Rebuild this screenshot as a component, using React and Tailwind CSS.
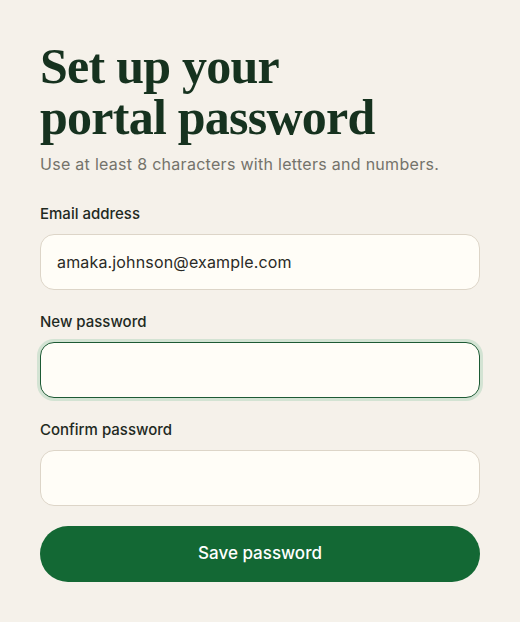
import React from "react";

const fields = [
    { label: "Email address", value: "amaka.johnson@example.com", type: "email" },
    { label: "New password", value: "", type: "password", focused: true },
    { label: "Confirm password", value: "", type: "password" },
];

export default function App() {
    return (
        <div className="min-h-screen w-full bg-[#f5f1ea] px-10 pt-[41px] [font-family:'Inter','Noto_Sans',sans-serif]">
            <h1 className="[font-family:'Liberation_Serif','DejaVu_Serif',serif] font-bold text-[#16321f] text-[50px] leading-[51px] tracking-[-0.015em]">
                <span className="block">Set up your</span>
                <span className="block">portal password</span>
            </h1>
            <p className="mt-[11px] text-[16px] leading-5 tracking-[0.018em] text-[#74736b]">
                Use at least 8 characters with letters and numbers.
            </p>

            <form className="mt-[30px] flex flex-col gap-[22px]" onSubmit={(e) => e.preventDefault()}>
                {fields.map((f, i) => (
                    <label key={i} className="flex flex-col gap-[10px]">
                        <span className="text-[15px] leading-5 font-medium text-[#1f2a1f]">{f.label}</span>
                        <input
                            type={f.type}
                            defaultValue={f.value}
                            className={
                                f.focused
                                    ? "h-14 w-full rounded-[14px] border border-[#1d5a34] bg-[#fffdf7] px-4 text-[16px] text-[#2a2a26] outline-none ring-[3px] ring-[#d3e3d3]"
                                    : "h-14 w-full rounded-[14px] border border-[#ddd5c8] bg-[#fffdf7] px-4 text-[16px] tracking-[0.01em] text-[#2a2a26] outline-none"
                            }
                        />
                    </label>
                ))}
                <button
                    type="submit"
                    className="-mt-[2px] h-14 w-full rounded-full bg-[#136834] text-[17px] font-medium text-white"
                >
                    Save password
                </button>
            </form>
        </div>
    );
}
